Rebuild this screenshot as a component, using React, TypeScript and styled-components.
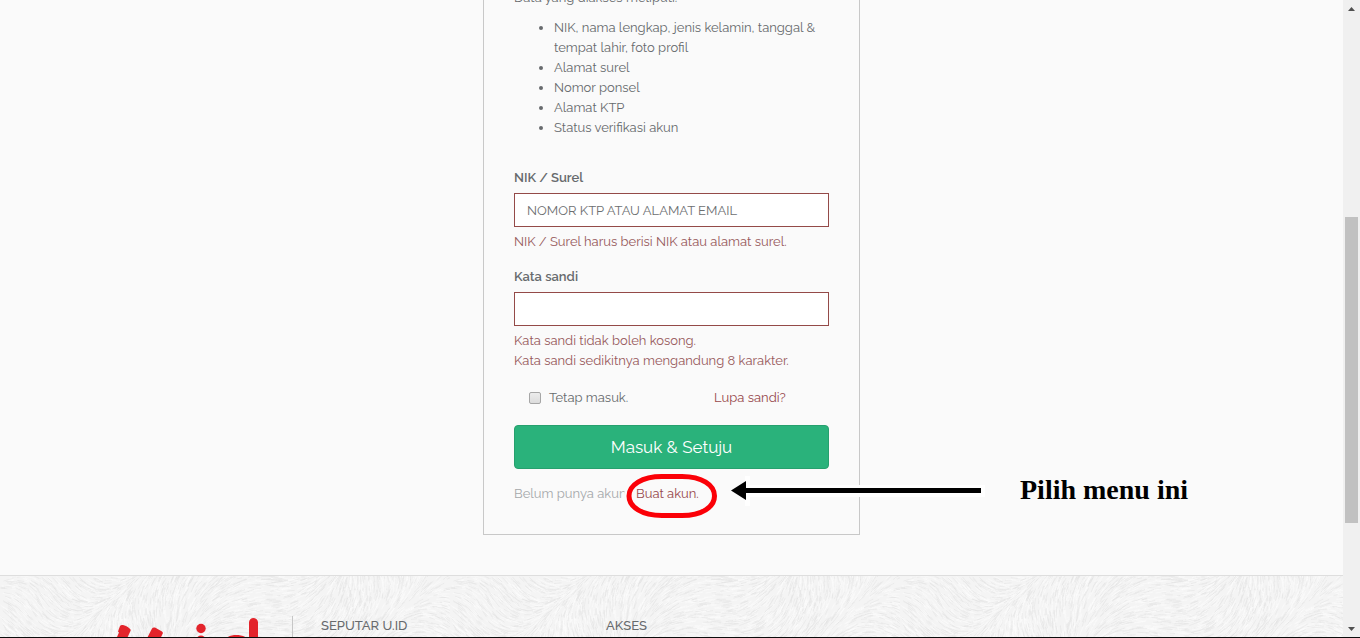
import React from "react";
import styled, { createGlobalStyle } from "styled-components";

const GlobalStyle = createGlobalStyle`
  * { box-sizing: border-box; }
  body {
    margin: 0;
    background: #fafafa;
    color: #676a6d;
    font-family: Raleway, Lato, "Liberation Sans", sans-serif;
    font-size: 13px;
    line-height: 20px;
  }
`;

const Shell = styled.div`
  display: grid;
  grid-template-columns: minmax(0, 1fr) 17px;
  height: 100vh;
  overflow: hidden;
  border-bottom: 1px solid #0c0c0c;
`;

const Page = styled.div`
  display: flex;
  flex-direction: column;
  min-height: 0;
  overflow: hidden;
`;

const Main = styled.main`
  flex: none;
  display: flex;
  justify-content: center;
  margin-top: -12px;
  padding-bottom: 40px;
`;

const Card = styled.section`
  width: 100%;
  max-width: 377px;
  padding: 0 30px;
  border: 1px solid #c8c8c8;
  border-top: 0;
`;

const Intro = styled.p`
  margin: 0 0 10px;
`;

const ScopeList = styled.ul`
  margin: 0 0 30px;
  padding-left: 40px;
`;

const Field = styled.div`
  margin-bottom: 15px;
`;

const Label = styled.label`
  display: block;
  margin-bottom: 5px;
  font-weight: 600;
`;

const TextInput = styled.input`
  display: block;
  width: 100%;
  height: 34px;
  margin-bottom: 5px;
  padding: 6px 12px;
  border: 1px solid #944a48;
  border-radius: 0;
  background: #fff;
  color: #676a6d;
  font: inherit;
  outline: 0;
  &::placeholder { color: #6c6e70; opacity: 1; }
`;

const FieldError = styled.div`
  color: #97595b;
`;

const Options = styled.div`
  display: grid;
  grid-template-columns: 185px 1fr;
  margin: 17px 0;
  padding-left: 15px;
`;

const Remember = styled.label`
  display: flex;
  align-items: center;
  gap: 8px;
`;

const Checkbox = styled.input`
  appearance: none;
  width: 12px;
  height: 12px;
  margin: 0;
  border: 1px solid #a6a6a6;
  border-radius: 2px;
  background: linear-gradient(#ececec, #dcdcdc);
  &:checked { background: #676a6d; }
`;

const TextLink = styled.a`
  color: #97484c;
  text-decoration: none;
`;

const SubmitButton = styled.button`
  display: block;
  width: 100%;
  height: 44px;
  margin-bottom: 15px;
  border: 1px solid #26a06e;
  border-radius: 4px;
  background: #2ab27b;
  color: #fff;
  font: inherit;
  font-size: 17px;
  cursor: pointer;
`;

const Signup = styled.div`
  position: relative;
  display: flex;
  margin-bottom: 30px;
  color: #a5a8aa;
  white-space: nowrap;
`;

const SignupText = styled.span`
  width: 122px;
`;

const SignupLink = styled(TextLink)`
  position: relative;
  z-index: 2;
`;

const Annotation = styled.div`
  position: absolute;
  z-index: 1;
  top: -11px;
  left: 110px;
  display: flex;
  align-items: flex-start;
  pointer-events: none;
`;

const Caption = styled.strong`
  margin: 2px 0 0 34px;
  color: #000;
  font: bold 28px/30px "Liberation Serif", serif;
`;

const Footer = styled.footer`
  position: relative;
  flex: none;
  height: 240px;
  border-top: 1px solid #dedede;
  background: #f4f4f4;
  overflow: hidden;
`;

const Texture = styled.svg`
  position: absolute;
  inset: 0;
  width: 100%;
  height: 100%;
`;

const FooterRow = styled.div`
  position: relative;
  display: grid;
  grid-template-columns: 177px 285px 285px;
  width: 100%;
  max-width: 1113px;
  margin: 0 auto;
  padding-top: 40px;
`;

const LogoLink = styled.a`
  display: block;
`;

const FooterColumn = styled.div<{ $divided?: boolean }>`
  min-height: 160px;
  padding-left: ${(p) => (p.$divided ? 28 : 29)}px;
  border-left: ${(p) => (p.$divided ? "1px solid #c6c6c6" : "0")};
`;

const FooterTitle = styled.h2`
  margin: 0;
  font-size: 13px;
  font-weight: 500;
  line-height: 20px;
`;

const Scrollbar = styled.div`
  display: flex;
  flex-direction: column;
  background: #f0f0f0;
`;

const ScrollButton = styled.button`
  display: flex;
  flex: none;
  align-items: center;
  justify-content: center;
  height: 17px;
  padding: 0;
  border: 0;
  background: transparent;
`;

const Track = styled.div<{ $share: number }>`
  flex: ${(p) => p.$share} 1 0;
`;

const Thumb = styled(Track)`
  margin: 0 2px;
  background: #c1c1c1;
`;

/* Short strands combed along a slowly turning direction field. */
function strands(seed: number, count: number) {
  let s = seed;
  const rnd = () => {
    s = (s * 16807) % 2147483647;
    return s / 2147483647;
  };
  let d = "";
  for (let i = 0; i < count; i++) {
    const x = rnd() * 450;
    const y = rnd() * 240;
    const a =
      -0.5 +
      0.9 * Math.sin((x / 450) * Math.PI * 4 + Math.sin(y / 40)) +
      0.5 * Math.sin(y / 24 + (x / 450) * Math.PI * 2) +
      (rnd() - 0.5) * 0.3;
    const len = 4 + rnd() * 8;
    const dx = Math.cos(a) * len;
    const dy = Math.sin(a) * len;
    d += `M${x.toFixed(1)} ${y.toFixed(1)}l${dx.toFixed(1)} ${dy.toFixed(1)}`;
  }
  return d;
}
const strandLayers = [11, 23, 37, 53, 71, 97].map((n, i) => ({
  d: strands(n * 1009, 1800),
  tone: i % 2 === 0 ? "#e4e4e4" : "#fbfbfb",
}));

function Logo() {
  return (
    <svg width="150" height="80" viewBox="0 0 150 80" fill="#e3242b" role="img" aria-label="U.id">
      <path d="M5 10 Q6 8.500 8 9 Q13 10 15.500 13.500 Q16 14.500 15 16 L7 33 Q5 42 13 40 Q21 38 27 32 L37 12.500 Q38 11 40 11.500 L47 15.500 Q48.500 16.500 47.500 18 L36 42 Q26 58 9 54 Q-9 49 -4 33 L2 21 L4 16.500 L3 15.500Z" />
      <circle cx="86" cy="12.500" r="4.700" />
      <rect x="81.500" y="19.500" width="9" height="35" rx="4.500" />
      <path fillRule="evenodd" d="M134 6.500 a4.500 4.500 0 0 1 9 0 V54 H135 V50 C125 58 104 55 104 37 C104 19 122 15 134 23Z M134 37 a10 10 0 1 0 -20 0 a10 10 0 1 0 20 0Z" />
    </svg>
  );
}

export default function App() {
  return (
    <>
      <GlobalStyle />
      <Shell>
        <Page>
          <Main>
            <Card>
              <Intro>Data yang diakses meliputi:</Intro>
              <ScopeList>
                <li>NIK, nama lengkap, jenis kelamin, tanggal &amp; tempat lahir, foto profil</li>
                <li>Alamat surel</li>
                <li>Nomor ponsel</li>
                <li>Alamat KTP</li>
                <li>Status verifikasi akun</li>
              </ScopeList>
              <form onSubmit={(e) => e.preventDefault()}>
                <Field>
                  <Label htmlFor="identity">NIK / Surel</Label>
                  <TextInput id="identity" type="text" placeholder="NOMOR KTP ATAU ALAMAT EMAIL" />
                  <FieldError>NIK / Surel harus berisi NIK atau alamat surel.</FieldError>
                </Field>
                <Field>
                  <Label htmlFor="password">Kata sandi</Label>
                  <TextInput id="password" type="password" />
                  <FieldError>Kata sandi tidak boleh kosong.</FieldError>
                  <FieldError>Kata sandi sedikitnya mengandung 8 karakter.</FieldError>
                </Field>
                <Options>
                  <Remember htmlFor="remember">
                    <Checkbox id="remember" type="checkbox" />
                    Tetap masuk.
                  </Remember>
                  <TextLink href="#lupa">Lupa sandi?</TextLink>
                </Options>
                <SubmitButton type="submit">Masuk &amp; Setuju</SubmitButton>
              </form>
              <Signup>
                <SignupText>Belum punya akun?</SignupText>
                <SignupLink href="#daftar">Buat akun.</SignupLink>
                <Annotation>
                  <svg width="362" height="46" viewBox="0 0 362 46">
                    <path
                      d="M38 3.500 H58 C78 3.500 90.500 12 90.500 23 C90.500 34 78 42.500 58 42.500 H38 C18 42.500 5.500 34 5.500 23 C5.500 12 18 3.500 38 3.500Z"
                      fill="#fafafa"
                      stroke="#fafafa"
                      strokeWidth="11"
                    />
                    <path
                      d="M38 3.500 H58 C78 3.500 90.500 12 90.500 23 C90.500 34 78 42.500 58 42.500 H38 C18 42.500 5 34 5 23 C5 12 18 3.500 38 3.500Z"
                      fill="#fafafa"
                      stroke="#fb0007"
                      strokeWidth="5"
                    />
                    <path d="M121 3 H126 V12 H361 V24 H126 V33 H121Z" fill="#fff" />
                    <path d="M107 17.500 L122 8 V15 H357 V20 H122 V27Z" fill="#000" />
                  </svg>
                  <Caption>Pilih menu ini</Caption>
                </Annotation>
              </Signup>
            </Card>
          </Main>
          <Footer>
            <Texture aria-hidden="true">
              <defs>
                <pattern id="fur" width="450" height="240" patternUnits="userSpaceOnUse">
                  {strandLayers.map((layer) => (
                    <path key={layer.d.slice(0, 24)} d={layer.d} fill="none" stroke={layer.tone} strokeOpacity="0.6" />
                  ))}
                </pattern>
              </defs>
              <rect width="100%" height="100%" fill="url(#fur)" />
            </Texture>
            <FooterRow>
              <LogoLink href="#beranda">
                <Logo />
              </LogoLink>
              <FooterColumn $divided>
                <FooterTitle>SEPUTAR U.ID</FooterTitle>
              </FooterColumn>
              <FooterColumn>
                <FooterTitle>AKSES</FooterTitle>
              </FooterColumn>
            </FooterRow>
          </Footer>
        </Page>
        <Scrollbar>
          <ScrollButton type="button" aria-label="Gulir ke atas">
            <svg width="7" height="4" viewBox="0 0 7 4"><path d="M3.500 0 L7 4 H0Z" fill="#505050" /></svg>
          </ScrollButton>
          <Track $share={200} />
          <Thumb $share={306} />
          <Track $share={97} />
          <ScrollButton type="button" aria-label="Gulir ke bawah">
            <svg width="7" height="4" viewBox="0 0 7 4"><path d="M0 0 H7 L3.500 4Z" fill="#505050" /></svg>
          </ScrollButton>
        </Scrollbar>
      </Shell>
    </>
  );
}
